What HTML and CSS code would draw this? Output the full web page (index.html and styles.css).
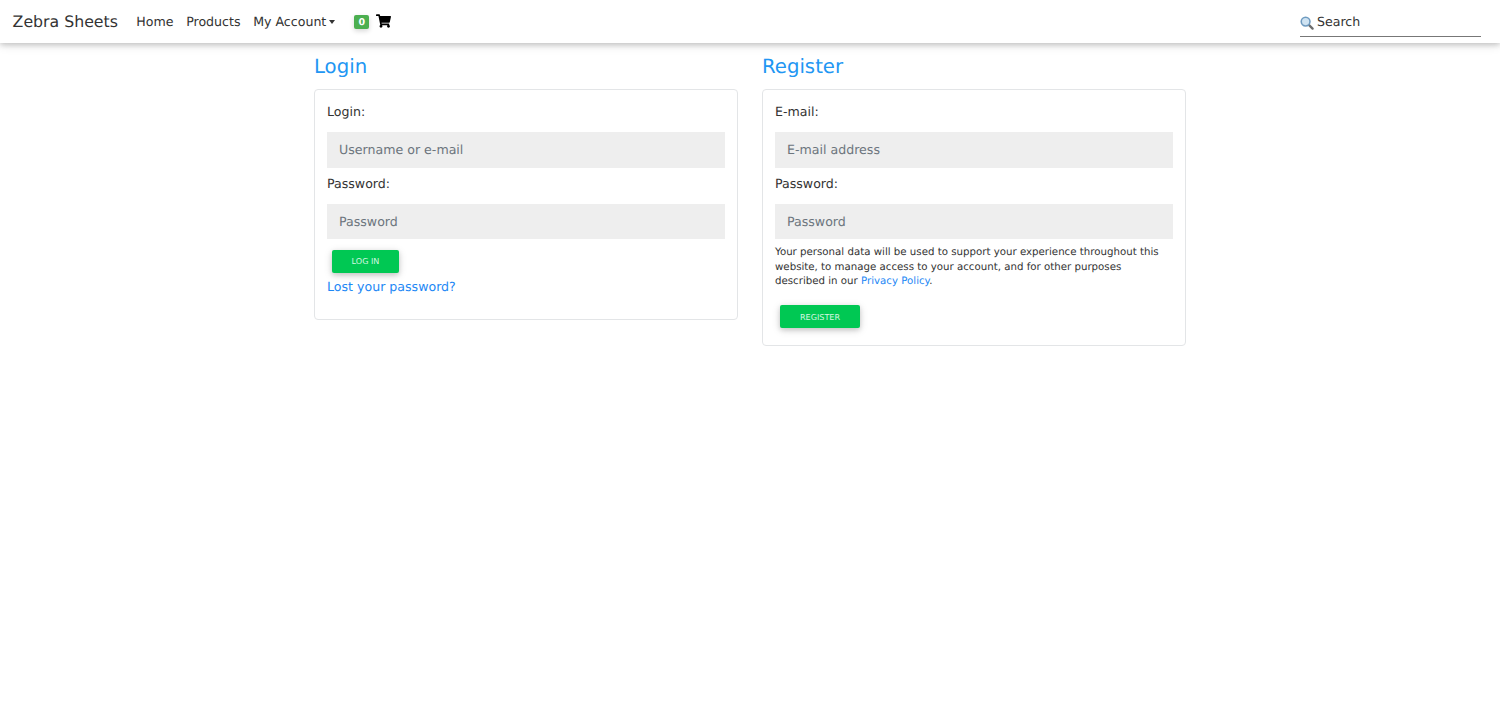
FILE: index.html
```html
<!DOCTYPE html>
<html lang="en">
<head>
<meta charset="utf-8">
<title>Zebra Sheets</title>
<link rel="stylesheet" href="styles.css">
</head>
<body>
<nav class="navbar">
  <a class="brand" href="#">Zebra Sheets</a>
  <ul class="nav-links">
    <li><a href="#">Home</a></li>
    <li><a href="#">Products</a></li>
    <li><a href="#" class="dropdown">My Account</a></li>
  </ul>
  <a class="cart" href="#">
    <span class="badge">0</span>
    <svg class="cart-icon" viewBox="0 0 576 512"><path d="M528.12 301.319l47.273-208C578.806 78.301 567.391 64 551.99 64H159.208l-9.166-44.81C147.758 8.021 137.93 0 126.529 0H24C10.745 0 0 10.745 0 24v16c0 13.255 10.745 24 24 24h69.883l70.248 343.435C147.325 417.1 136 435.222 136 456c0 30.928 25.072 56 56 56s56-25.072 56-56c0-15.674-6.447-29.835-16.824-40h209.647C430.447 426.165 424 440.326 424 456c0 30.928 25.072 56 56 56s56-25.072 56-56c0-22.172-12.888-41.332-31.579-50.405l5.517-24.276c3.413-15.018-8.002-29.319-23.403-29.319H218.117l-6.545-32h293.145c11.206 0 20.92-7.754 23.403-18.681z"/></svg>
  </a>
  <div class="search">
    <svg class="search-icon" viewBox="0 0 16 16">
      <path class="handle" d="M9.8 9.8 L14.4 14.4"/>
      <circle class="lens" cx="6.4" cy="6.4" r="5"/>
    </svg>
    <span>Search</span>
  </div>
</nav>
<main class="container">
  <section class="col">
    <h2>Login</h2>
    <form class="card">
      <label>Login:</label>
      <input class="field" type="text" placeholder="Username or e-mail">
      <label>Password:</label>
      <input class="field" type="password" placeholder="Password">
      <button class="btn btn-login" type="button">LOG IN</button>
      <a class="lost" href="#">Lost your password?</a>
    </form>
  </section>
  <section class="col">
    <h2>Register</h2>
    <form class="card card-register">
      <label>E-mail:</label>
      <input class="field" type="text" placeholder="E-mail address">
      <label>Password:</label>
      <input class="field" type="password" placeholder="Password">
      <p class="privacy">Your personal data will be used to support your experience throughout this website, to manage access to your account, and for other purposes described in our <a href="#">Privacy Policy</a>.</p>
      <button class="btn btn-register" type="button">REGISTER</button>
    </form>
  </section>
</main>
</body>
</html>
```
FILE: styles.css
```css
* { box-sizing: border-box; }
html, body { margin: 0; padding: 0; }
body {
  font-family: "DejaVu Sans", sans-serif;
  font-size: 12.6px;
  line-height: 1.5;
  color: #212529;
  background: #fff;
  height: 720px;
  overflow: hidden;
  text-rendering: geometricPrecision;
}
a { text-decoration: none; }

.navbar {
  height: 43px;
  display: flex;
  align-items: center;
  padding: 1px 19px 0 12.6px;
  background: #fff;
  box-shadow: 0 2px 5px rgba(0,0,0,.16), 0 2px 10px rgba(0,0,0,.12);
}
.brand { font-size: 15.75px; color: #333; margin-right: 18.4px; white-space: nowrap; }
.nav-links { display: flex; gap: 12.6px; list-style: none; margin: 0; padding: 0; }
.nav-links a { color: #333; font-size: 12.6px; white-space: nowrap; }
.dropdown { display: flex; align-items: center; }
.dropdown::after {
  content: "";
  margin-left: 3px;
  border-top: 4px solid #333;
  border-left: 3.5px solid transparent;
  border-right: 3.5px solid transparent;
}
.cart { display: flex; align-items: center; margin-left: 19px; }
.badge {
  width: 15px;
  height: 14px;
  border-radius: 2px;
  background: #4caf50;
  color: #fff;
  font-size: 9.5px;
  font-weight: 700;
  line-height: 15px;
  text-align: center;
  box-shadow: 0 2px 5px rgba(0,0,0,.16);
}
.cart-icon { width: 15px; height: 14px; margin-left: 7px; margin-top: -2px; fill: #000; }
.search {
  margin-left: auto;
  width: 181px;
  height: 30px;
  padding-top: 2px;
  display: flex;
  align-items: center;
  gap: 3px;
  border-bottom: 1px solid #777;
  font-size: 12.6px;
  color: #333;
}
.search-icon { width: 14px; height: 14px; }
.lens { fill: #cfe3f2; stroke: #6f9bc0; stroke-width: 1.8; }
.handle { stroke: #6d6d6d; stroke-width: 2.6; stroke-linecap: round; fill: none; }

.container {
  width: 896px;
  margin: 0 auto;
  display: flex;
  align-items: flex-start;
}
.col { width: 448px; padding: 0 12px; }
h2 {
  margin: 8px 0 7px;
  font-size: 19.7px;
  font-weight: 400;
  line-height: 31px;
  color: #2196f3;
}
.card {
  display: flex;
  flex-direction: column;
  align-items: flex-start;
  height: 231px;
  padding: 12px;
  border: 1px solid #e3e5e7;
  border-radius: 4px;
}
.card-register { height: 257px; }
label { font-size: 12.6px; line-height: 19px; margin-bottom: 11px; color: #333; }
.field {
  width: 100%;
  height: 35.5px;
  margin-bottom: 6px;
  padding: 0 12px;
  border: 0;
  background: #eee;
  font: 12.6px "DejaVu Sans", sans-serif;
  text-rendering: geometricPrecision;
  color: #495057;
}
.field::placeholder { color: #6c757d; opacity: 1; }
.field:last-of-type { margin-bottom: 0; }
.btn {
  height: 23px;
  border: 0;
  border-radius: 2px;
  background: #00c853;
  color: #d4f7e0;
  font: 8.1px "DejaVu Sans", sans-serif;
  text-rendering: geometricPrecision;
  box-shadow: 0 2px 5px rgba(0,0,0,.16), 0 2px 10px rgba(0,0,0,.12);
  padding: 0;
}
.btn-login { width: 67px; margin: 10.5px 0 4.5px 5px; }
.btn-register { width: 80px; margin: 15px 0 0 5px; padding-top: 1px; }
.lost { font-size: 12.6px; line-height: 19px; color: #1e88f5; }
.privacy {
  margin: 7px 0 0;
  font-size: 10.22px;
  line-height: 14.5px;
  color: #333;
}
.privacy a { color: #1e88f5; }
```
